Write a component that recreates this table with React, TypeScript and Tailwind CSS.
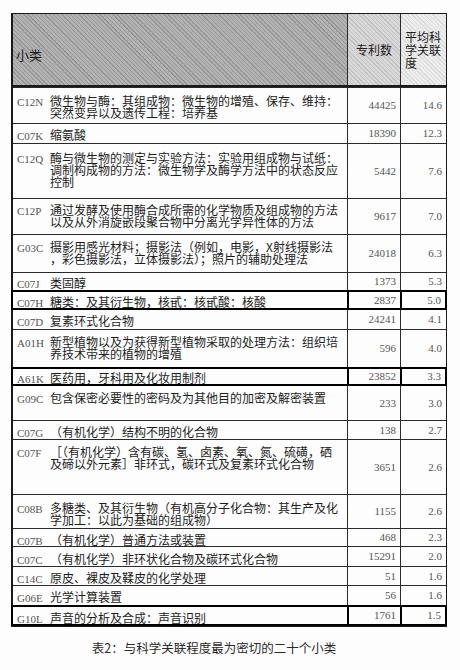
import React from "react";

type Row = {
  code: string;
  lines: string[];
  count: string;
  score: string;
  h: string; // row height class
  pt: string; // text top padding class
  bold?: boolean;
};

const ROWS: Row[] = [
  { code: "C12N", lines: ["微生物与酶：其组成物：微生物的增殖、保存、维持：", "突然变异以及遗传工程：培养基"], count: "44425", score: "14.6", h: "h-[36px]", pt: "pt-[6px]" },
  { code: "C07K", lines: ["缩氨酸"], count: "18390", score: "12.3", h: "h-[20px]", pt: "pt-[4px]" },
  { code: "C12Q", lines: ["酶与微生物的测定与实验方法：实验用组成物与试纸：", "调制构成物的方法：微生物学及酶学方法中的状态反应", "控制"], count: "5442", score: "7.6", h: "h-[55px]", pt: "pt-[7px]" },
  { code: "C12P", lines: ["通过发酵及使用酶合成所需的化学物质及组成物的方法", "以及从外消旋嵌段聚合物中分离光学异性体的方法"], count: "9617", score: "7.0", h: "h-[36px]", pt: "pt-[4px]" },
  { code: "G03C", lines: ["摄影用感光材料；摄影法（例如，电影，X射线摄影法", "，彩色摄影法，立体摄影法）；照片的辅助处理法"], count: "24018", score: "6.3", h: "h-[38px]", pt: "pt-[5px]" },
  { code: "C07J", lines: ["类固醇"], count: "1373", score: "5.3", h: "h-[18px]", pt: "pt-[3px]" },
  { code: "C07H", lines: ["糖类：及其衍生物，核甙：核甙酸：核酸"], count: "2837", score: "5.0", h: "h-[20px]", pt: "pt-[3px]", bold: true },
  { code: "C07D", lines: ["复素环式化合物"], count: "24241", score: "4.1", h: "h-[20px]", pt: "pt-[4px]" },
  { code: "A01H", lines: ["新型植物以及为获得新型植物采取的处理方法：组织培", "养技术带来的植物的增殖"], count: "596", score: "4.0", h: "h-[38px]", pt: "pt-[5px]" },
  { code: "A61K", lines: ["医药用，牙科用及化妆用制剂"], count: "23852", score: "3.3", h: "h-[19px]", pt: "pt-[2px]", bold: true },
  { code: "G09C", lines: ["包含保密必要性的密码及为其他目的加密及解密装置"], count: "233", score: "3.0", h: "h-[35px]", pt: "pt-[5px]" },
  { code: "C07G", lines: ["（有机化学）结构不明的化合物"], count: "138", score: "2.7", h: "h-[19px]", pt: "pt-[4px]" },
  { code: "C07F", lines: ["［（有机化学）含有碳、氢、卤素、氧、氮、硫磺，硒", "及碲以外元素］非环式，碳环式及复素环式化合物"], count: "3651", score: "2.6", h: "h-[55px]", pt: "pt-[5px]" },
  { code: "C08B", lines: ["多糖类、及其衍生物（有机高分子化合物：其生产及化", "学加工：以此为基础的组成物）"], count: "1155", score: "2.6", h: "h-[34px]", pt: "pt-[6px]" },
  { code: "C07B", lines: ["（有机化学）普通方法或装置"], count: "468", score: "2.3", h: "h-[18px]", pt: "pt-[4px]" },
  { code: "C07C", lines: ["（有机化学）非环状化合物及碳环式化合物"], count: "15291", score: "2.0", h: "h-[20px]", pt: "pt-[5px]" },
  { code: "C14C", lines: ["原皮、裸皮及鞣皮的化学处理"], count: "51", score: "1.6", h: "h-[19px]", pt: "pt-[4px]" },
  { code: "G06E", lines: ["光学计算装置"], count: "56", score: "1.6", h: "h-[20px]", pt: "pt-[4px]" },
  { code: "G10L", lines: ["声音的分析及合成：声音识别"], count: "1761", score: "1.5", h: "h-[21px]", pt: "pt-[4px]", bold: true },
];

const cjk = "font-['Noto_Sans_CJK_SC','Noto_Sans',sans-serif]";
const serif = "font-['Liberation_Serif','DejaVu_Serif',serif]";

function TableRow({ row }: { row: Row }) {
  const divider = row.bold ? "border-l-2 border-black" : "border-l border-[#2a2a2a]";
  return (
    <div
      className={
        "flex " +
        row.h +
        (row.bold
          ? " relative z-10 -mx-[2px] -mr-px -mb-px border-2 border-black"
          : " border-t border-[#2a2a2a]")
      }
    >
      <div className={"flex w-[334px] shrink-0 items-baseline pl-[4px] " + row.pt}>
        <span className={serif + " w-[33px] shrink-0 text-[11px] text-[#555]"}>{row.code}</span>
        <div className={cjk + " text-[12px] leading-[12px] text-[#1c1c1c]"}>
          {row.lines.map((l, i) => (
            <div key={i} className="whitespace-nowrap">
              {l}
            </div>
          ))}
        </div>
      </div>
      <div className={serif + " flex w-[53px] shrink-0 items-center justify-end pr-[4px] text-[11px] text-[#555] " + divider}>
        {row.count}
      </div>
      <div className={serif + " flex flex-1 items-center justify-end pr-[4px] text-[11px] text-[#555] " + divider}>
        {row.score}
      </div>
    </div>
  );
}

export default function App() {
  return (
    <div className="w-[460px] h-[670px] bg-[#fdfdfd] pt-[13px] pl-[11px]">
      <div className="w-[436px] border-l-2 border-t border-r border-b-2 border-[#1a1a1a]">
        {/* header */}
        <div className={cjk + " flex h-[73px] border-b-2 border-[#1a1a1a] text-[#1c1c1c]"}>
          <div className="w-[334px] shrink-0 pl-[3px] pt-[34px] text-[13px] leading-[14px] bg-[repeating-linear-gradient(45deg,#989898_0px,#989898_1px,#b2b2b2_1px,#b2b2b2_3px)]">
            小类
          </div>
          <div className="flex w-[53px] shrink-0 items-center justify-center border-l border-[#2a2a2a] text-[12px] bg-[repeating-linear-gradient(45deg,#c4c4c4_0px,#c4c4c4_1px,#d8d8d8_1px,#d8d8d8_3px)]">
            专利数
          </div>
          <div className="flex flex-1 items-center border-l border-[#2a2a2a] pl-[4px] text-[12px] leading-[13px] bg-[repeating-linear-gradient(45deg,#dcdcdc_0px,#dcdcdc_1px,#ececec_1px,#ececec_3px)]">
            <div>
              平均科
              <br />
              学关联
              <br />度
            </div>
          </div>
        </div>
        {ROWS.map((r) => (
          <TableRow key={r.code} row={r} />
        ))}
      </div>
      <div className={cjk + " mt-[14px] pr-[43px] text-center text-[12.5px] leading-[14px] text-[#2a2a2a]"}>
        表2：与科学关联程度最为密切的二十个小类
      </div>
    </div>
  );
}
